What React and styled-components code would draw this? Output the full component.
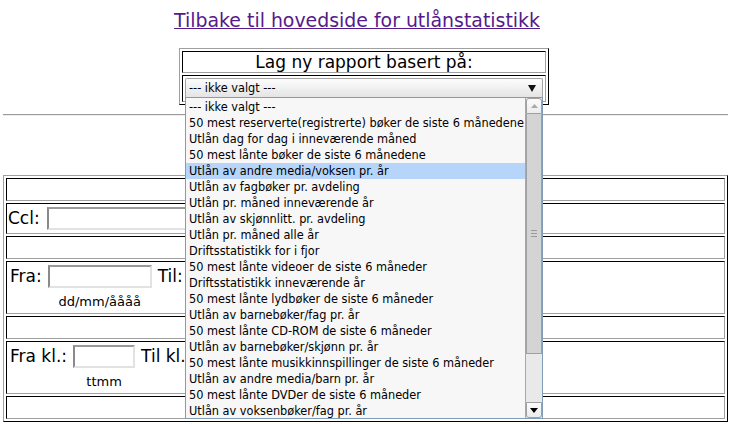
import React from 'react';
import styled, { createGlobalStyle } from 'styled-components';

const GlobalStyle = createGlobalStyle`
  html, body {
    margin: 0;
    padding: 0;
    background: #fff;
  }
  body {
    font-family: "DejaVu Sans", Verdana, sans-serif;
    font-size: 17px;
    color: #000;
  }
`;

const OPTIONS = [
  '--- ikke valgt ---',
  '50 mest reserverte(registrerte) bøker de siste 6 månedene',
  'Utlån dag for dag i inneværende måned',
  '50 mest lånte bøker de siste 6 månedene',
  'Utlån av andre media/voksen pr. år',
  'Utlån av fagbøker pr. avdeling',
  'Utlån pr. måned inneværende år',
  'Utlån av skjønnlitt. pr. avdeling',
  'Utlån pr. måned alle år',
  'Driftsstatistikk for i fjor',
  '50 mest lånte videoer de siste 6 måneder',
  'Driftsstatistikk inneværende år',
  '50 mest lånte lydbøker de siste 6 måneder',
  'Utlån av barnebøker/fag pr. år',
  '50 mest lånte CD-ROM de siste 6 måneder',
  'Utlån av barnebøker/skjønn pr. år',
  '50 mest lånte musikkinnspillinger de siste 6 måneder',
  'Utlån av andre media/barn pr. år',
  '50 mest lånte DVDer de siste 6 måneder',
  'Utlån av voksenbøker/fag pr. år',
];

const Page = styled.div`
  width: 725px;
  margin-left: 3px;
  padding-top: 9px;
`;

const BackLink = styled.a`
  display: block;
  text-align: center;
  font-size: 18.9px;
  line-height: 22px;
  color: #551a8b;
  text-decoration: underline;
  padding-right: 17px;
`;

// table border="1" look: outset frame, inset cells, 2px spacing
const Frame = styled.div`
  box-sizing: border-box;
  width: ${({ $w }) => ($w ? `${$w}px` : '100%')};
  margin-left: ${({ $left }) => $left || 0}px;
  margin-top: ${({ $top }) => $top || 0}px;
  border: 1px solid;
  border-color: #a0a0a0 #000 #000 #a0a0a0;
  padding: 2px;
  display: flex;
  flex-direction: column;
  gap: 2px;
`;

const Cell = styled.div`
  box-sizing: border-box;
  height: ${({ $h }) => $h}px;
  border: 1px solid;
  border-color: #000 #a0a0a0 #a0a0a0 #000;
  padding: 1px;
  position: relative;
`;

const Heading = styled.div`
  text-align: center;
  line-height: 18px;
`;

const SelectBox = styled.div`
  position: relative;
  box-sizing: border-box;
  width: 358px;
  height: 20px;
  margin: 1px 0 0 1px;
  border: 1px solid #a4a4a4;
  border-bottom-color: #7f9db9;
  border-radius: 2px 2px 0 0;
  background: linear-gradient(#fdfdfd, #e4e4e4);
  font-family: "DejaVu Sans Condensed", "DejaVu Sans", sans-serif;
  font-stretch: semi-condensed;
  font-size: 12.6px;
  line-height: 18px;
  padding-left: 3px;
  display: flex;
  align-items: center;
  justify-content: space-between;
  z-index: 5;
`;

const SelectArrow = styled.svg`
  width: 8px;
  height: 7px;
  margin-right: 6px;
`;

const DropList = styled.div`
  position: absolute;
  top: 18px;
  left: -1px;
  box-sizing: border-box;
  width: 358px;
  height: 322px;
  border: 1px solid #7f9db9;
  background: #f7f7f7;
  display: flex;
  overflow: hidden;
`;

const OptionList = styled.div`
  flex: 1;
  overflow: hidden;
  padding-top: 1px;
`;

const Option = styled.div`
  height: 16px;
  line-height: 16px;
  padding-left: 3px;
  white-space: nowrap;
  background: ${({ $active }) => ($active ? '#b7d5fb' : 'transparent')};
  color: #000;
`;

const ScrollBar = styled.div`
  width: 16px;
  display: flex;
  flex-direction: column;
  background: #e8e8e8;
  border-left: 1px solid #a8a8a8;
`;

const ScrollButton = styled.div`
  height: 16px;
  flex-shrink: 0;
  box-sizing: border-box;
  display: flex;
  align-items: center;
  justify-content: center;
  background: linear-gradient(#fbfbfb, #ececec);
  border: 1px solid #a0a0a0;
  border-radius: ${({ $down }) => ($down ? '0 0 3px 3px' : '3px 3px 0 0')};
`;

const Track = styled.div`
  flex: 1;
  display: flex;
  flex-direction: column;
  background: #e9e9e9;
`;

const Thumb = styled.div`
  height: 240px;
  box-sizing: border-box;
  background: #d4d4d4;
  border: 1px solid #a0a0a0;
  border-top: none;
  display: flex;
  flex-direction: column;
  align-items: center;
  justify-content: center;
  gap: 2px;
`;

const Grip = styled.span`
  width: 6px;
  height: 1px;
  background: #9a9a9a;
`;

const Rule = styled.div`
  margin-top: 9px;
  border-top: 1px solid #9a9a9a;
  border-bottom: 1px solid #eee;
`;

const Row = styled.div`
  display: flex;
  align-items: ${({ $top }) => ($top ? 'flex-start' : 'center')};
  gap: ${({ $gap }) => $gap || 6}px;
  padding: ${({ $top }) => ($top ? '2px 0 0 2px' : '0')};
  height: 100%;
  white-space: nowrap;
`;

const Label = styled.span`
  line-height: 23px;
`;

const Field = styled.div`
  display: flex;
  flex-direction: column;
  align-items: center;
  gap: 6px;
`;

const TextInput = styled.div`
  box-sizing: border-box;
  width: ${({ $w }) => $w}px;
  height: 23px;
  flex-shrink: 0;
  background: #fff;
  border: 2px solid;
  border-color: #9a9a9a #e2e2e2 #e2e2e2 #8a8a8a;
`;

const Hint = styled.span`
  font-size: 13px;
  line-height: 15px;
`;

const UpIcon = () => (
  <svg width="7" height="4" viewBox="0 0 7 4">
    <polygon points="0,4 7,4 3.5,0" fill="#a9a9a9" />
  </svg>
);

const DownIcon = () => (
  <svg width="8" height="5" viewBox="0 0 8 5">
    <polygon points="0,0 8,0 4,5" fill="#000" />
  </svg>
);

const Range = ({ from, to, w, hint }) => (
  <Row $top>
    <Label>{from}</Label>
    <Field>
      <TextInput $w={w} />
      <Hint>{hint}</Hint>
    </Field>
    <Label>{to}</Label>
    <Field>
      <TextInput $w={w} />
      <Hint>{hint}</Hint>
    </Field>
  </Row>
);

export default function App() {
  return (
    <>
      <GlobalStyle />
      <Page>
        <BackLink href="#">Tilbake til hovedside for utlånstatistikk</BackLink>

        <Frame $w={370} $left={176} $top={17}>
          <Cell $h={22}>
            <Heading>Lag ny rapport basert på:</Heading>
          </Cell>
          <Cell $h={27}>
            <SelectBox>
              <span>--- ikke valgt ---</span>
              <SelectArrow viewBox="0 0 8 7">
                <polygon points="0,0 8,0 4,7" fill="#111" />
              </SelectArrow>
              <DropList>
                <OptionList>
                  {OPTIONS.map((o, i) => (
                    <Option key={o} $active={i === 4}>{o}</Option>
                  ))}
                </OptionList>
                <ScrollBar>
                  <ScrollButton>
                    <UpIcon />
                  </ScrollButton>
                  <Track>
                    <Thumb>
                      <Grip />
                      <Grip />
                      <Grip />
                    </Thumb>
                  </Track>
                  <ScrollButton $down>
                    <DownIcon />
                  </ScrollButton>
                </ScrollBar>
              </DropList>
            </SelectBox>
          </Cell>
        </Frame>

        <Rule />

        <Frame $top={59}>
          <Cell $h={23}>&nbsp;</Cell>
          <Cell $h={31}>
            <Row $gap={7}>
              <Label>Ccl:</Label>
              <TextInput $w={300} />
            </Row>
          </Cell>
          <Cell $h={23}>&nbsp;</Cell>
          <Cell $h={53}>
            <Range from="Fra:" to="Til:" w={104} hint="dd/mm/åååå" />
          </Cell>
          <Cell $h={23}>&nbsp;</Cell>
          <Cell $h={53}>
            <Range from="Fra kl.:" to="Til kl.:" w={62} hint="ttmm" />
          </Cell>
          <Cell $h={23}>&nbsp;</Cell>
        </Frame>
      </Page>
    </>
  );
}
